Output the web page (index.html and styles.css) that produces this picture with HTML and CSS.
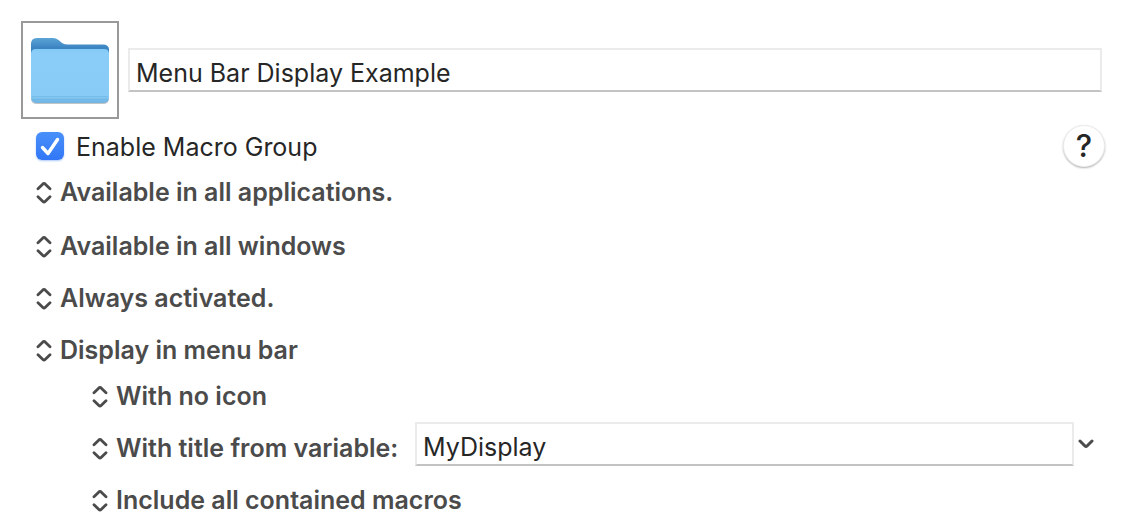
FILE: index.html
```html
<!DOCTYPE html>
<html lang="en">
<head>
  <meta charset="UTF-8" />
  <meta name="viewport" content="width=device-width, initial-scale=1.0" />
  <title>Menu Bar Display Example</title>
  <link rel="stylesheet" href="styles.css">
</head>
<body>
  <!-- Shared arrow icon for the popup menus -->
  <svg width="0" height="0" class="symbols" aria-hidden="true">
    <symbol id="updown" viewBox="0 0 16 24">
      <path d="M2 8.7L6.9 3.9Q8 2.900 9.1 3.9L14 8.700M2 16.700L6.900 21.500Q8 22.500 9.100 21.500L14 16.700" />
    </symbol>
  </svg>

  <main class="group-editor">
    <!-- Icon and name -->
    <header class="group-header">
      <button class="icon-well" type="button" aria-label="Group icon">
        <svg class="folder" viewBox="0 0 80 68" aria-hidden="true">
          <defs>
            <linearGradient id="folderBack" x1="0" y1="0" x2="0" y2="1">
              <stop offset="0" stop-color="#5ba4d6" />
              <stop offset="0.18" stop-color="#3b84c2" />
              <stop offset="1" stop-color="#3b84c2" />
            </linearGradient>
            <linearGradient id="folderFront" x1="0" y1="0" x2="0" y2="1">
              <stop offset="0" stop-color="#83caf6" />
              <stop offset="0.08" stop-color="#8acdf8" />
              <stop offset="0.88" stop-color="#87cbf6" />
              <stop offset="0.93" stop-color="#79bdea" />
              <stop offset="1" stop-color="#6fb5e3" />
            </linearGradient>
          </defs>
          <path d="M1 9Q1 3 7 3H23Q26 3 28.500 4.500L33 8Q35 9 38 9H73Q79 9 79 15V62Q79 68 73 68H7Q1 68 1 62Z" fill="#9b9ca0" opacity="0.6" />
          <path d="M1 8Q1 2 7 2H23Q26 2 28.500 4L32 7Q34.500 8.500 38 8.500H73Q79 8.500 79 14V57H1Z" fill="url(#folderBack)" />
          <path d="M1 18Q1 13 6 13H74Q79 13 79 18V61Q79 67 73 67H7Q1 67 1 61Z" fill="url(#folderFront)" />
          <path d="M2 60.500H78M2 63.500H78" stroke="#6cb3e2" stroke-width="0.600" />
        </svg>
      </button>
      <input class="text-field name-field" type="text" value="Menu Bar Display Example" aria-label="Group name">
    </header>

    <!-- Enable toggle and help -->
    <div class="enable-row">
      <label class="enable-label">
        <input class="enable-box" type="checkbox" checked>
        <span>Enable Macro Group</span>
      </label>
      <button class="help-btn" type="button" aria-label="Help">?</button>
    </div>

    <!-- Availability options -->
    <div class="options app-options">
      <div class="option">
        <svg class="arrows" aria-hidden="true"><use href="#updown" /></svg>
        <select class="popup" aria-label="Applications"><option>Available in all applications.</option></select>
      </div>
    </div>
    <div class="options window-options">
      <div class="option">
        <svg class="arrows" aria-hidden="true"><use href="#updown" /></svg>
        <select class="popup" aria-label="Windows"><option>Available in all windows</option></select>
      </div>
      <div class="option">
        <svg class="arrows" aria-hidden="true"><use href="#updown" /></svg>
        <select class="popup" aria-label="Activation"><option>Always activated.</option></select>
      </div>
      <div class="option">
        <svg class="arrows" aria-hidden="true"><use href="#updown" /></svg>
        <select class="popup" aria-label="Display"><option>Display in menu bar</option></select>
      </div>
    </div>

    <!-- Menu bar options -->
    <div class="options menu-options">
      <div class="option">
        <svg class="arrows" aria-hidden="true"><use href="#updown" /></svg>
        <select class="popup" aria-label="Icon"><option>With no icon</option></select>
      </div>
      <div class="option">
        <svg class="arrows" aria-hidden="true"><use href="#updown" /></svg>
        <select class="popup" aria-label="Title source"><option>With title from variable:</option></select>
        <div class="variable">
          <input class="text-field" type="text" value="MyDisplay" aria-label="Variable name">
          <button class="variable-btn" type="button" aria-label="Choose variable">
            <svg viewBox="0 0 16 10" aria-hidden="true"><path d="M2 2L7 7Q8 8 9 7L14 2" /></svg>
          </button>
        </div>
      </div>
      <div class="option">
        <svg class="arrows" aria-hidden="true"><use href="#updown" /></svg>
        <select class="popup" aria-label="Contained macros"><option>Include all contained macros</option></select>
      </div>
    </div>
  </main>
</body>
</html>
```

FILE: styles.css
```css
* {
  box-sizing: border-box;
}
body {
  margin: 0;
  background: #fff;
  color: #262626;
  font-family: Inter, "Liberation Sans", sans-serif;
  font-size: 25px;
}
button,
input,
select {
  margin: 0;
  font: inherit;
  color: inherit;
}
button {
  padding: 0;
  border: none;
  background: none;
}
.symbols {
  position: absolute;
}
.group-editor {
  padding: 21px 19px 12px 21px;
}

/* Icon and name */
.group-header {
  display: flex;
  align-items: center;
  gap: 9px;
  padding-right: 3px;
}
.icon-well {
  display: flex;
  align-items: center;
  justify-content: center;
  flex: none;
  width: 98px;
  height: 98px;
  border: 2px solid #999;
}
.folder {
  width: 80px;
  height: 68px;
}
.text-field {
  flex: 1;
  min-width: 0;
  height: 44px;
  padding: 6px 6px 0;
  border: 2px solid #ebebeb;
  border-bottom-color: #c3c3c3;
  border-radius: 0;
  background: #fff;
}

/* Enable toggle and help */
.enable-row {
  display: flex;
  align-items: center;
  justify-content: space-between;
  margin-top: 6px;
  padding-left: 15px;
}
.enable-label {
  display: flex;
  align-items: center;
  gap: 12px;
}
.enable-label span {
  padding-top: 2px;
}
.enable-box {
  appearance: none;
  width: 28px;
  height: 28px;
  border-radius: 6px;
  background: url("data:image/svg+xml,%3Csvg xmlns='http://www.w3.org/2000/svg' viewBox='0 0 28 28'%3E%3Cpath d='M6.500 15.500L12 21.500L21.500 7.500' fill='none' stroke='white' stroke-width='3.400' stroke-linecap='round' stroke-linejoin='round'/%3E%3C/svg%3E"), linear-gradient(#4a90fa, #3177f6);
  box-shadow: 0 1px 2px rgba(49, 119, 246, 0.4);
}
.help-btn {
  width: 42px;
  height: 42px;
  border: 1px solid #ececec;
  border-radius: 50%;
  background: #fff;
  box-shadow: 0 1px 2px rgba(0, 0, 0, 0.3);
  font-size: 31px;
  font-weight: 500;
  line-height: 40px;
}

/* Popup rows */
.options {
  display: grid;
  gap: 12px;
  padding-left: 15px;
}
.app-options {
  margin-top: 5px;
}
.window-options {
  margin-top: 14px;
}
.menu-options {
  margin-top: 6px;
  padding-left: 71px;
}
.option {
  display: flex;
  align-items: center;
  height: 40px;
  color: #4b4b4b;
}
.arrows {
  flex: none;
  width: 16px;
  height: 24px;
  margin-right: 8px;
  fill: none;
  stroke: #4b4b4b;
  stroke-width: 2.8;
  stroke-linecap: round;
}
.popup {
  appearance: none;
  padding: 0;
  border: none;
  background: none;
  font-size: 25px;
  font-weight: 600;
}

/* Variable name with its chooser */
.variable {
  display: flex;
  flex: 1;
  align-items: center;
  min-width: 0;
  margin-left: 16px;
  padding-bottom: 8px;
}
.variable .text-field {
  color: #262626;
}
.variable-btn {
  display: flex;
  flex: none;
  margin: 0 11px 0 4px;
}
.variable-btn svg {
  width: 16px;
  height: 10px;
  fill: none;
  stroke: #4b4b4b;
  stroke-width: 3;
  stroke-linecap: round;
}
```
